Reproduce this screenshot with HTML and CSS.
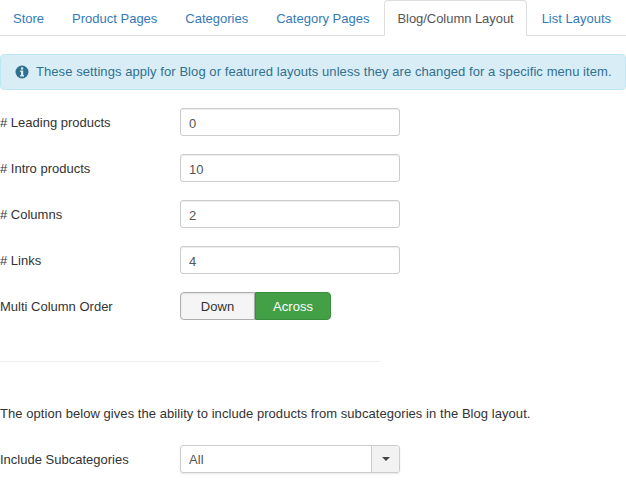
FILE: index.html
```html
<!DOCTYPE html>
<html lang="en">
<head>
    <meta charset="UTF-8">
    <title>Blog/Column Layout</title>
    <link rel="stylesheet" href="styles.css">
</head>
<body>

    <ul class="tabs">
        <li><a href="#">Store</a></li>
        <li><a href="#">Product Pages</a></li>
        <li><a href="#">Categories</a></li>
        <li><a href="#">Category Pages</a></li>
        <li class="active"><a href="#">Blog/Column Layout</a></li>
        <li><a href="#">List Layouts</a></li>
    </ul>

    <div class="alert">
        <svg class="alert-icon" viewBox="0 0 14 14">
            <circle cx="7" cy="7" r="6.5" fill="#31708f"/>
            <rect x="5.9" y="2.4" width="2.3" height="2.1" fill="#d9edf7"/>
            <path d="M5.2 5.6h3v4.4h.8v1.4H5.2V10h.8V7H5.2z" fill="#d9edf7"/>
        </svg>
        <span>These settings apply for Blog or featured layouts unless they are changed for a specific menu item.</span>
    </div>

    <div class="row">
        <label>#&nbsp;Leading products</label>
        <input type="text" value="0">
    </div>
    <div class="row">
        <label>#&nbsp;Intro products</label>
        <input type="text" value="10">
    </div>
    <div class="row">
        <label>#&nbsp;Columns</label>
        <input type="text" value="2">
    </div>
    <div class="row">
        <label>#&nbsp;Links</label>
        <input type="text" value="4">
    </div>
    <div class="row">
        <label>Multi Column Order</label>
        <div class="btn-group">
            <button class="btn">Down</button>
            <button class="btn btn-on">Across</button>
        </div>
    </div>

    <hr class="divider">

    <p class="note">The option below gives the ability to include products from subcategories in the Blog layout.</p>

    <div class="row">
        <label>Include Subcategories</label>
        <div class="select">
            <span class="select-value">All</span>
            <span class="select-arrow"><i class="caret"></i></span>
        </div>
    </div>

</body>
</html>
```

FILE: styles.css
```css
* {
    box-sizing: border-box;
    margin: 0;
    padding: 0;
}

html, body {
    height: 491px;
    overflow: hidden;
}

body {
    background: #fff;
    color: #333;
    font-family: "Liberation Sans", Arial, sans-serif;
    font-size: 13px;
    line-height: 18px;
    letter-spacing: 0.055px;
}

.tabs {
    display: flex;
    list-style: none;
    height: 36px;
    border-bottom: 1px solid #ddd;
    letter-spacing: 0;
}

.tabs li {
    height: 36px;
    margin-right: 2px;
    white-space: nowrap;
}

.tabs a {
    display: block;
    height: 36px;
    padding: 9px 12px 8px;
    border: 1px solid transparent;
    border-radius: 4px 4px 0 0;
    color: #337ab7;
    text-decoration: none;
}

.tabs .active a {
    background: #fff;
    border-color: #ddd #ddd #fff;
    color: #555;
    letter-spacing: -0.05px;
}

.alert {
    display: flex;
    align-items: center;
    height: 36px;
    margin-top: 18px;
    padding: 0 0 0 14px;
    background: #d9edf7;
    border: 1px solid #bce8f1;
    border-radius: 4px;
    color: #31708f;
    letter-spacing: 0.07px;
    white-space: nowrap;
}

.alert-icon {
    width: 14px;
    height: 14px;
    margin-right: 7px;
    flex-shrink: 0;
}

.row {
    display: flex;
    align-items: center;
    height: 28px;
    margin-bottom: 18px;
}

.alert + .row {
    margin-top: 18px;
}

label {
    width: 180px;
    flex-shrink: 0;
    padding-top: 2px;
    letter-spacing: 0;
}

input {
    width: 220px;
    height: 28px;
    padding: 5px 8px 3px;
    border: 1px solid #ccc;
    border-radius: 3px;
    box-shadow: inset 0 1px 1px rgba(0, 0, 0, 0.075);
    color: #555;
    font: inherit;
    letter-spacing: inherit;
}

.btn-group {
    display: flex;
}

.btn {
    width: 75px;
    height: 28px;
    padding-top: 2px;
    background: #f5f5f5;
    border: 1px solid #adadad;
    border-radius: 4px 0 0 4px;
    box-shadow: inset 0 1px 2px rgba(0, 0, 0, 0.08);
    color: #333;
    font: inherit;
    letter-spacing: inherit;
}

.btn-on {
    width: 76px;
    background: #43a047;
    border-color: #388e3c;
    border-radius: 0 4px 4px 0;
    box-shadow: none;
    color: #fff;
}

.divider {
    width: 380px;
    margin-top: 41px;
    border: 0;
    border-top: 1px solid #eee;
}

.note {
    margin-top: 43px;
    margin-bottom: 22px;
}

.select {
    display: flex;
    width: 220px;
    height: 28px;
    border: 1px solid #ccc;
    border-radius: 3px;
    box-shadow: 0 1px 2px rgba(0, 0, 0, 0.1);
}

.select-value {
    flex: 1;
    padding: 5px 8px 3px;
    color: #555;
}

.select-arrow {
    display: flex;
    align-items: center;
    justify-content: center;
    width: 28px;
    background: #f2f2f2;
    border-left: 1px solid #ccc;
    border-radius: 0 3px 3px 0;
}

.caret {
    border-top: 4px solid #444;
    border-left: 4px solid transparent;
    border-right: 4px solid transparent;
}
```
